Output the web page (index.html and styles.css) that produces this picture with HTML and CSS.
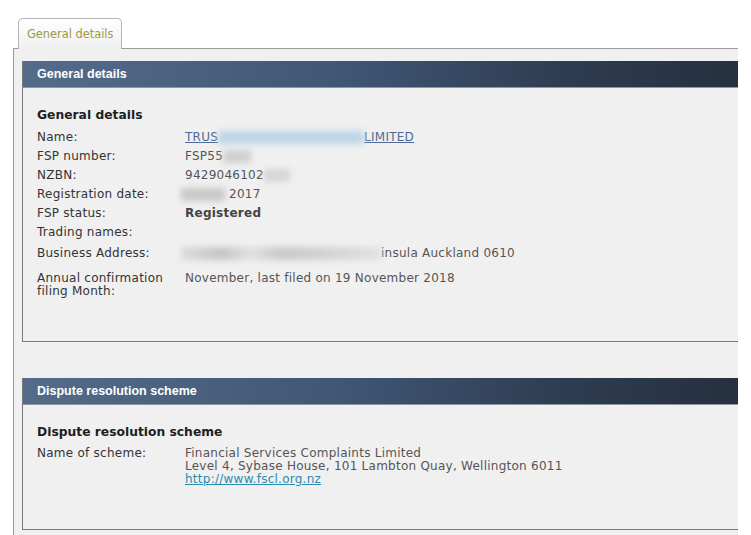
FILE: index.html
```html
<!DOCTYPE html>
<html>
<head>
<meta charset="utf-8">
<link rel="stylesheet" href="styles.css">
</head>
<body>
<div class="page">
  <div class="tabs">
    <div class="tab">General details</div>
  </div>
  <div class="panel">
    <div class="box box-general">
      <div class="box-head">General details</div>
      <div class="box-body">
        <h3 class="title">General details</h3>
        <div class="rows">
          <div class="row"><div class="label">Name:</div><div class="value"><a class="link" href="#">TRUS<span class="blur blur-name"></span>LIMITED</a></div></div>
          <div class="row"><div class="label">FSP number:</div><div class="value">FSP55<span class="blur blur-fsp"></span></div></div>
          <div class="row"><div class="label">NZBN:</div><div class="value">9429046102<span class="blur blur-nzbn"></span></div></div>
          <div class="row"><div class="label">Registration date:</div><div class="value"><span class="blur blur-date"></span>2017</div></div>
          <div class="row"><div class="label">FSP status:</div><div class="value strong">Registered</div></div>
          <div class="row"><div class="label">Trading names:</div><div class="value"></div></div>
          <div class="row row-address"><div class="label">Business Address:</div><div class="value"><span class="blur blur-address"></span>insula Auckland 0610</div></div>
          <div class="row row-annual"><div class="label">Annual confirmation filing Month:</div><div class="value">November, last filed on 19 November 2018</div></div>
        </div>
      </div>
    </div>
    <div class="box box-dispute">
      <div class="box-head">Dispute resolution scheme</div>
      <div class="box-body">
        <h3 class="title title-dispute">Dispute resolution scheme</h3>
        <div class="rows">
          <div class="row row-scheme"><div class="label">Name of scheme:</div><div class="value">Financial Services Complaints Limited<br>Level 4, Sybase House, 101 Lambton Quay, Wellington 6011<br><a class="link link-teal" href="#">http://www.fscl.org.nz</a></div></div>
        </div>
      </div>
    </div>
  </div>
</div>
</body>
</html>
```

FILE: styles.css
```css
html, body {
  margin: 0;
  padding: 0;
  background: #ffffff;
}

body {
  font-family: "DejaVu Sans", Verdana, sans-serif;
  font-size: 12px;
  letter-spacing: 0.25px;
  color: #555;
}

.page {
  height: 535px;
  overflow: hidden;
  padding: 18px 13px 0 13px;
  box-sizing: border-box;
  display: flex;
  flex-direction: column;
}

.tabs {
  display: flex;
  padding-left: 5px;
  position: relative;
  z-index: 1;
  margin-bottom: -1px;
}

.tab {
  height: 31px;
  box-sizing: border-box;
  padding: 0 8px;
  border: 1px solid #b4b4b4;
  border-bottom: none;
  border-radius: 5px 5px 0 0;
  background: linear-gradient(#ffffff, #f0f0f0);
  color: #9a9a48;
  line-height: 30px;
  font-size: 11.4px;
  letter-spacing: 0;
  white-space: nowrap;
}

.panel {
  flex: 1;
  border-top: 1px solid #9a9a9a;
  border-left: 1px solid #9a9a9a;
  background: #f0f0f0;
  padding: 12px 0 0 8px;
  display: flex;
  flex-direction: column;
}

.box {
  border: 1px solid #7a7a7a;
  border-right: none;
  background: #f0f0f0;
  box-sizing: border-box;
}

.box-general {
  height: 281px;
}

.box-dispute {
  margin-top: 36px;
  height: 152px;
}

.box-head {
  height: 27px;
  box-sizing: border-box;
  margin-top: -1px;
  padding-left: 14px;
  line-height: 27px;
  font-family: "Liberation Sans", Arial, sans-serif;
  font-weight: bold;
  font-size: 12.5px;
  letter-spacing: 0;
  color: #ffffff;
  background: linear-gradient(to right, #546c8a 0%, #3f5674 45%, #2f3d52 75%, #253040 100%);
  border-bottom: 1px solid #8e98a4;
}

.box-body {
  padding: 18px 0 0 14px;
}

.title {
  margin: 0 0 4px 0;
  font-size: 12.3px;
  font-weight: bold;
  color: #1e1e1e;
  letter-spacing: 0;
  font-family: "DejaVu Sans", Verdana, sans-serif;
  line-height: 18px;
}

.title-dispute {
  margin-bottom: 3px;
}

.rows {
  display: flex;
  flex-direction: column;
}

.row {
  display: grid;
  grid-template-columns: 148px 1fr;
  line-height: 19px;
  height: 19px;
}

.row-address {
  margin-top: 2px;
}

.row-annual {
  margin-top: 9px;
  line-height: 13px;
  height: auto;
}

.row-scheme {
  margin-top: 3px;
  line-height: 13px;
  height: auto;
}

.label {
  color: #333;
  padding-right: 8px;
}

.value {
  color: #555;
}

.strong {
  font-weight: bold;
  color: #444;
}

.link {
  color: #4f6a98;
  text-decoration: underline;
}

.link-teal {
  color: #2a8cae;
}

.blur {
  display: inline-block;
  vertical-align: middle;
  height: 13px;
  filter: blur(3px);
  background: #d2d2d2;
}

.blur-name {
  width: 146px;
  background: #bcd6e6;
}

.blur-fsp {
  width: 28px;
  background: #cfcfcf;
}

.blur-nzbn {
  width: 26px;
  background: #d6d6d6;
}

.blur-date {
  width: 44px;
  margin-left: -4px;
  margin-right: 4px;
  background: #c8c8c8;
}

.blur-address {
  width: 200px;
  margin-left: -4px;
  background: linear-gradient(to right, #dcdcdc, #c4c4c4 20%, #e0e0e0 35%, #c8c8c8 50%, #d0d0d0 70%, #e2e2e2);
}
```
